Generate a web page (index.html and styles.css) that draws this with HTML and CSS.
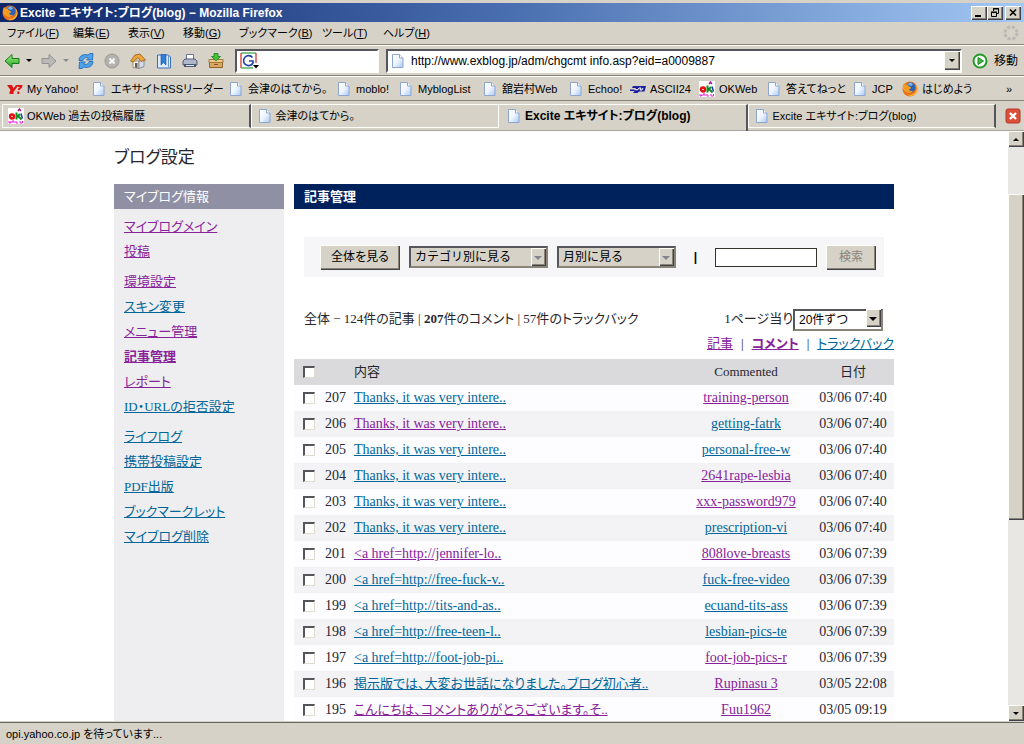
FILE: index.html
```html
<!DOCTYPE html>
<html lang="ja">
<head>
<meta charset="utf-8">
<title>Excite エキサイト:ブログ(blog) - Mozilla Firefox</title>
<link rel="stylesheet" href="styles.css">
</head>
<body>
<svg class="defs" width="0" height="0" aria-hidden="true">
  <defs>
    <linearGradient id="pg" x1="0" y1="0" x2="1" y2="1"><stop offset="0" stop-color="#fff"/><stop offset=".5" stop-color="#eef5ff"/><stop offset="1" stop-color="#a9c8f5"/></linearGradient>
    <linearGradient id="gr" x1="0" y1="0" x2="0" y2="1"><stop offset="0" stop-color="#a6f08a"/><stop offset="1" stop-color="#1fa01f"/></linearGradient>
    <symbol id="page" viewBox="0 0 16 16"><path d="M2.500 1.500h7l3.500 3.500v9.500H2.500z" fill="url(#pg)" stroke="#8ea6cf"/><path d="M9.500 1.500v3.500H13" fill="#fff" stroke="#8ea6cf"/></symbol>
    <symbol id="fox" viewBox="0 0 16 16"><circle cx="8" cy="8" r="7.500" fill="#e8701a"/><circle cx="8.500" cy="6.500" r="5" fill="#2c62b8"/><path d="M5 3l4-1.500 2 2-2 1.500z" fill="#79b8ee"/><path d="M.8 5.500C1 3.500 2 2.500 2.500 1.800c0 1 .5 1.500 1 1.800C5 3.500 6 4 6.500 5L9 6.500c0 1-1 1.500-2 1.700.5 1.800 2.500 2.300 4 1.300-1 2.500-4.500 3.500-7 1.500C1.500 10 .6 8 .8 5.500z" fill="#f59a22"/><path d="M13 3c2 2.500 2 6 0 8.500-2 2.300-5 3-8 2 4 3 10 1 10.500-5C15.600 6 14.500 4 13 3z" fill="#ffb52e"/></symbol>
    <symbol id="okweb" viewBox="0 0 16 16"><path d="M0 0h16v16H0z" fill="#fff"/><circle cx="4" cy="8.500" r="2" fill="none" stroke="#e01010" stroke-width="2.400"/><path d="M8.500 4.500v7M9 9l3-3M10 8l3.500 3.500" stroke="#118c22" stroke-width="2" fill="none"/><path d="M10 3L11.500 1 13 3" stroke="#a0108a" stroke-width="1.300" fill="none"/><path d="M13 5.500l1.500 5" stroke="#1838b0" stroke-width="1.500"/><path d="M1 13v2h1.500v-1.500M4 15v-2h2v2M8 13v2h2M12 13v2h2.500v-2" stroke="#f018d8" fill="none"/></symbol>
  </defs>
</svg>
<div class="window">
  <header class="titlebar">
    <svg class="icon"><use href="#fox"/></svg>
    <h1>Excite エキサイト:ブログ(blog) − Mozilla Firefox</h1>
    <div class="window-buttons">
      <button type="button" aria-label="最小化"><svg viewBox="0 0 14 12"><path d="M3 8h6v2H3z"/></svg></button>
      <button type="button" aria-label="元に戻す"><svg viewBox="0 0 14 12"><path d="M5.500 4V1.500h5v5H9M5 2h6M3.500 5.500h5v4h-5zM3 5h6" fill="none" stroke="#000"/></svg></button>
      <button type="button" class="apart" aria-label="閉じる"><svg viewBox="0 0 14 12"><path d="M4 2.500l6 6M10 2.500l-6 6" stroke="#000" stroke-width="1.600"/></svg></button>
    </div>
  </header>
  <nav class="menubar">
    <button type="button">ファイル(<u>F</u>)</button>
    <button type="button">編集(<u>E</u>)</button>
    <button type="button">表示(<u>V</u>)</button>
    <button type="button">移動(<u>G</u>)</button>
    <button type="button">ブックマーク(<u>B</u>)</button>
    <button type="button">ツール(<u>T</u>)</button>
    <button type="button">ヘルプ(<u>H</u>)</button>
    <svg class="icon throbber" viewBox="0 0 16 16"><circle cx="8" cy="8" r="6" fill="none" stroke="#bcb8b4" stroke-width="3" stroke-dasharray="3.200 1.510"/></svg>
  </nav>
  <div class="toolbar">
    <div class="tools">
      <button type="button" class="with-caret" aria-label="戻る"><svg class="icon" viewBox="0 0 16 16"><path d="M1 8l7-6.500v4h7v5H8v4z" fill="url(#gr)" stroke="#167a16"/></svg><i class="caret"></i></button>
      <button type="button" class="with-caret faded" aria-label="進む"><svg class="icon" viewBox="0 0 16 16"><path d="M15 8L8 1.500v4H1v5h7v4z" fill="#b9b9b7" stroke="#91918f"/></svg><i class="caret"></i></button>
      <button type="button" aria-label="更新"><svg class="icon" viewBox="0 0 16 16"><path d="M1 7.500C1 3 5.500.5 10 2l2-1.500 3 0-.5 6.500H8.500L10.500 5C8 3.800 5.500 5 5 7.500zM15 8.500c0 4.500-4.500 7-9 5.500L4 15.500H1L1.500 9h6l-2 2c2.500 1.200 5 0 5.500-2.500z" fill="#4fa3ea" stroke="#1b63b5" stroke-width=".8"/></svg></button>
      <button type="button" aria-label="中止"><svg class="icon" viewBox="0 0 16 16"><circle cx="8" cy="8" r="7" fill="#b4b2ae" stroke="#9a9894"/><path d="M5.500 5.500l5 5M10.500 5.500l-5 5" stroke="#fff" stroke-width="1.800"/></svg></button>
      <button type="button" aria-label="ホーム"><svg class="icon" viewBox="0 0 16 16"><path d="M3 8v6.500l6 1V8z" fill="#fff4dc" stroke="#8f7a55" stroke-width=".8"/><path d="M9 8v7.500l5-2V7z" fill="#d8dcea" stroke="#70789a" stroke-width=".8"/><path d="M.5 8L5 2l5-1 5.500 6-4.500 1.500L8 4.500 3 9z" fill="#efa63a" stroke="#8d5a1c" stroke-width=".8"/><path d="M5 10h2.500v5L5 14.500z" fill="#555c70"/></svg></button>
      <button type="button" aria-label="ブックマーク"><svg class="icon" viewBox="0 0 16 16"><path d="M1.500 2h11l2 2v11h-13z" fill="#dceafc" stroke="#3a70b8"/><path d="M5 1.500h5V12L7.500 9.500 5 12z" fill="#2d7fd8" stroke="#1b529e" stroke-width=".6"/><path d="M12.500 3v11" stroke="#6d92c6"/></svg></button>
      <button type="button" aria-label="印刷"><svg class="icon" viewBox="0 0 16 16"><path d="M4.500 7V1.500h7V7" fill="#fff" stroke="#66759a"/><path d="M1 8l2-2h10l2 2v4H1z" fill="#aeb6c9" stroke="#505a78"/><path d="M2 11h12v3H2z" fill="#4c5672"/><path d="M4 12.500h8" stroke="#dfe5f4"/></svg></button>
      <button type="button" aria-label="ダウンロード"><svg class="icon" viewBox="0 0 16 16"><path d="M1.500 8h13v6.500h-13z" fill="#d9a864" stroke="#91662a"/><path d="M1 6.500h14v3H1z" fill="#efc88d" stroke="#91662a" stroke-width=".8"/><path d="M6 11.500h4" stroke="#805622"/><path d="M6 .5h4v3h2.500L8 8 3.500 3.500H6z" fill="#46c238" stroke="#16801a" stroke-width=".8"/></svg></button>
    </div>
    <label class="field search-field">
      <svg class="google" viewBox="0 0 20 18"><path d="M1 1h15v15H1z" fill="#fff"/><path d="M1 1v15" stroke="#d4281e" stroke-width="1.200"/><path d="M1 1h15" stroke="#2f9e3d" stroke-width="1.200"/><path d="M16 1v10" stroke="#d4281e" stroke-width="1.200"/><path d="M1 16h12" stroke="#2f9e3d" stroke-width="1.200"/><path d="M12.500 5.500A5 5 0 1 0 13 11V9H9" fill="none" stroke="#2343ae" stroke-width="1.600"/><path d="M13 13h6l-3 3.500z"/></svg>
      <input type="text" aria-label="検索">
    </label>
    <label class="field url-field">
      <svg class="icon"><use href="#page"/></svg>
      <input type="text" aria-label="アドレス" value="http://www.exblog.jp/adm/chgcmt info.asp?eid=a0009887">
      <button type="button" class="drop" aria-label="履歴"><i class="caret"></i></button>
    </label>
    <button type="button" class="go"><svg class="icon" viewBox="0 0 16 16"><circle cx="8" cy="8" r="6.500" fill="#fff" stroke="#239a2a" stroke-width="2"/><path d="M6 4.500L11.500 8 6 11.500z" fill="#3fb83c" stroke="#188a1c"/></svg>移動</button>
  </div>
  <nav class="bookmarks">
    <a href="#"><svg class="icon" viewBox="0 0 16 16"><path d="M0 4h5l1.500 3.500L9 4h2.500L6.500 11v2H2.500v-2L3.500 9z" fill="#e01212"/><path d="M11 4h4.500l-.5 2.500L12.500 9h-1.800l.5-1.500L13 6h-2zM10.300 10.500h2V13h-2z" fill="#e01212"/></svg>My Yahoo!</a>
    <a href="#"><svg class="icon"><use href="#page"/></svg>エキサイトRSSリーダー</a>
    <a href="#"><svg class="icon"><use href="#page"/></svg>会津のはてから。</a>
    <a href="#"><svg class="icon"><use href="#page"/></svg>moblo!</a>
    <a href="#"><svg class="icon"><use href="#page"/></svg>MyblogList</a>
    <a href="#"><svg class="icon"><use href="#page"/></svg>舘岩村Web</a>
    <a href="#"><svg class="icon"><use href="#page"/></svg>Echoo!</a>
    <a href="#"><svg class="icon" viewBox="0 0 16 16"><path d="M3 5h13l-1.500 5.500H9L7.500 12H3l1.500-2H0V8.500h5L6 7H2z" fill="#1c1c9c"/><path d="M4.500 8.700h3.500l1-1.700h2l-1 2h2l1-2" stroke="#fff" fill="none"/></svg>ASCII24</a>
    <a href="#"><svg class="icon"><use href="#okweb"/></svg>OKWeb</a>
    <a href="#"><svg class="icon"><use href="#page"/></svg>答えてねっと</a>
    <a href="#"><svg class="icon"><use href="#page"/></svg>JCP</a>
    <a href="#"><svg class="icon"><use href="#fox"/></svg>はじめよう</a>
    <button type="button" aria-label="その他のブックマーク">»</button>
  </nav>
  <div class="tabs">
    <button type="button" class="tab"><svg class="icon"><use href="#okweb"/></svg>OKWeb 過去の投稿履歴</button>
    <button type="button" class="tab before-current"><svg class="icon"><use href="#page"/></svg>会津のはてから。</button>
    <button type="button" class="tab current"><svg class="icon"><use href="#page"/></svg>Excite エキサイト:ブログ(blog)</button>
    <button type="button" class="tab"><svg class="icon"><use href="#page"/></svg>Excite エキサイト:ブログ(blog)</button>
    <button type="button" class="close-tab" aria-label="タブを閉じる"><svg class="icon" viewBox="0 0 16 16"><rect x="1" y="1" width="14" height="14" rx="2" fill="#dc5038" stroke="#b23a28"/><path d="M5 5l6 6M11 5l-6 6" stroke="#fff" stroke-width="2.400"/></svg></button>
  </div>
  <div class="viewport">
    <div class="page">
      <h2>ブログ設定</h2>
      <div class="columns">
        <aside>
          <h3>マイブログ情報</h3>
          <ul>
            <li><a class="seen" href="#">マイブログメイン</a></li>
            <li><a class="seen" href="#">投稿</a></li>
          </ul>
          <ul>
            <li><a class="seen" href="#">環境設定</a></li>
            <li><a href="#">スキン変更</a></li>
            <li><a class="seen" href="#">メニュー管理</a></li>
            <li><a class="seen strong" href="#">記事管理</a></li>
            <li><a class="seen" href="#">レポート</a></li>
            <li><a href="#">ID・URLの拒否設定</a></li>
          </ul>
          <ul>
            <li><a href="#">ライフログ</a></li>
            <li><a href="#">携帯投稿設定</a></li>
            <li><a href="#">PDF出版</a></li>
            <li><a href="#">ブックマークレット</a></li>
            <li><a href="#">マイブログ削除</a></li>
          </ul>
        </aside>
        <main>
          <h3>記事管理</h3>
          <form class="filter">
            <button type="button" class="push">全体を見る</button>
            <span class="pick wide"><select aria-label="カテゴリ"><option>カテゴリ別に見る</option></select></span>
            <span class="pick"><select aria-label="月"><option>月別に見る</option></select></span>
            <b class="bar">|</b>
            <input type="text" aria-label="記事検索">
            <button type="button" class="push small" disabled>検索</button>
          </form>
          <div class="summary">
            <p>全体 − 124件の記事 | <b>207</b>件のコメント | 57件のトラックバック</p>
            <label>1ページ当り<span class="pick count"><select><option>20件ずつ</option></select></span></label>
          </div>
          <nav class="kinds"><a class="seen" href="#">記事</a><span>|</span><a class="seen strong" href="#">コメント</a><span>|</span><a href="#">トラックバック</a></nav>
          <table>
            <thead>
              <tr><th class="check"><input type="checkbox" aria-label="すべて選択"></th><th class="num"></th><th class="body">内容</th><th class="who">Commented</th><th class="date">日付</th></tr>
            </thead>
            <tbody>
              <tr><td><input type="checkbox" aria-label="207"></td><td>207</td><td><a href="#">Thanks, it was very intere..</a></td><td class="who"><a class="seen" href="#">training-person</a></td><td class="date">03/06 07:40</td></tr>
              <tr><td><input type="checkbox" aria-label="206"></td><td>206</td><td><a class="seen" href="#">Thanks, it was very intere..</a></td><td class="who"><a href="#">getting-fatrk</a></td><td class="date">03/06 07:40</td></tr>
              <tr><td><input type="checkbox" aria-label="205"></td><td>205</td><td><a href="#">Thanks, it was very intere..</a></td><td class="who"><a href="#">personal-free-w</a></td><td class="date">03/06 07:40</td></tr>
              <tr><td><input type="checkbox" aria-label="204"></td><td>204</td><td><a href="#">Thanks, it was very intere..</a></td><td class="who"><a class="seen" href="#">2641rape-lesbia</a></td><td class="date">03/06 07:40</td></tr>
              <tr><td><input type="checkbox" aria-label="203"></td><td>203</td><td><a href="#">Thanks, it was very intere..</a></td><td class="who"><a class="seen" href="#">xxx-password979</a></td><td class="date">03/06 07:40</td></tr>
              <tr><td><input type="checkbox" aria-label="202"></td><td>202</td><td><a href="#">Thanks, it was very intere..</a></td><td class="who"><a href="#">prescription-vi</a></td><td class="date">03/06 07:40</td></tr>
              <tr><td><input type="checkbox" aria-label="201"></td><td>201</td><td><a class="seen" href="#">&lt;a href=http://jennifer-lo..</a></td><td class="who"><a class="seen" href="#">808love-breasts</a></td><td class="date">03/06 07:39</td></tr>
              <tr><td><input type="checkbox" aria-label="200"></td><td>200</td><td><a href="#">&lt;a href=http://free-fuck-v..</a></td><td class="who"><a href="#">fuck-free-video</a></td><td class="date">03/06 07:39</td></tr>
              <tr><td><input type="checkbox" aria-label="199"></td><td>199</td><td><a href="#">&lt;a href=http://tits-and-as..</a></td><td class="who"><a href="#">ecuand-tits-ass</a></td><td class="date">03/06 07:39</td></tr>
              <tr><td><input type="checkbox" aria-label="198"></td><td>198</td><td><a href="#">&lt;a href=http://free-teen-l..</a></td><td class="who"><a href="#">lesbian-pics-te</a></td><td class="date">03/06 07:39</td></tr>
              <tr><td><input type="checkbox" aria-label="197"></td><td>197</td><td><a href="#">&lt;a href=http://foot-job-pi..</a></td><td class="who"><a class="seen" href="#">foot-job-pics-r</a></td><td class="date">03/06 07:39</td></tr>
              <tr><td><input type="checkbox" aria-label="196"></td><td>196</td><td><a class="kana" href="#">掲示版では、大変お世話になりました。ブログ初心者..</a></td><td class="who"><a class="seen" href="#">Rupinasu 3</a></td><td class="date">03/05 22:08</td></tr>
              <tr><td><input type="checkbox" aria-label="195"></td><td>195</td><td><a class="seen kana" href="#">こんにちは、コメントありがとうございます。そ..</a></td><td class="who"><a class="seen" href="#">Fuu1962</a></td><td class="date">03/05 09:19</td></tr>
            </tbody>
          </table>
        </main>
      </div>
    </div>
    <div class="scrollbar">
      <button type="button" class="step" aria-label="上へ"><i class="caret up"></i></button>
      <div class="track"><div class="thumb"></div></div>
      <button type="button" class="step" aria-label="下へ"><i class="caret"></i></button>
    </div>
  </div>
  <footer class="status">opi.yahoo.co.jp を待っています...</footer>
</div>
</body>
</html>
```
FILE: styles.css
```css
:root {
  --face: #d6d2c8;
  --lite: #fffffa;
  --dark: #8a8478;
  --ink: #26262e;
  --raised: inset 1px 1px 0 var(--lite), inset -1px -1px 0 #404048, inset -2px -2px 0 var(--dark);
}
* { box-sizing: border-box; }
body {
  margin: 0;
  background: var(--face);
  font: 12px/16px "Liberation Sans", "Noto Sans CJK JP", sans-serif;
  font-feature-settings: "palt";
  color: #000;
}
button, input, select { font: inherit; font-feature-settings: inherit; color: inherit; border: 0; padding: 0; margin: 0; background: none; border-radius: 0; }
h1, h2, h3, p, ul { margin: 0; padding: 0; font-weight: normal; font-size: inherit; }
ul { list-style: none; }
.defs { position: absolute; }
.icon { width: 16px; height: 16px; flex: none; display: block; }
.window { display: flex; flex-direction: column; height: 100vh; white-space: nowrap; overflow: hidden; }

.titlebar {
  display: flex; align-items: center; height: 22px; padding: 0 3px 0 2px; gap: 2px;
  background: linear-gradient(90deg, #0b246a, #4a6fb0 50%, #a3c8f4);
  border-top: 3px solid var(--face);
  flex: none;
}
.titlebar h1 { flex: 1; color: #fff; font-weight: bold; font-size: 12px; }
.window-buttons { display: flex; }
.window-buttons button { width: 16px; height: 14px; background: var(--face); box-shadow: var(--raised); display: flex; padding: 1px; }
.window-buttons svg { width: 14px; height: 12px; }
.window-buttons .apart { margin-left: 2px; }

.menubar {
  display: grid; grid-template-columns: 66px 55px 55px 56px 83px 61px 60px 1fr; align-items: center;
  height: 23px; padding: 0 5px 0 7px; border-bottom: 1px solid var(--dark); flex: none;
  font-size: 11px;
}
.menubar button { text-align: left; }
.throbber { justify-self: end; }

.toolbar { display: flex; align-items: center; height: 31px; padding: 0 6px 0 4px; border-top: 1px solid var(--lite); border-bottom: 1px solid var(--dark); flex: none; }
.tools { display: flex; gap: 10px; width: 231px; }
.tools .with-caret { display: flex; align-items: center; gap: 6px; width: 27px; }
.caret { flex: none; width: 0; height: 0; border: 3px solid transparent; border-top-color: #000; border-bottom: 0; }
.caret.up { border: 3px solid transparent; border-bottom-color: #000; border-top: 0; }
.faded .caret { border-top-color: #8a8a8a; }
.field { display: flex; align-items: center; height: 24px; background: #fff; border: 2px solid #55555c; border-right-color: var(--lite); border-bottom-color: var(--lite); }
.field input { flex: 1; min-width: 0; height: 18px; outline: 0; }
.search-field { width: 144px; margin-right: 7px; padding-left: 2px; }
.google { width: 22px; height: 18px; flex: none; }
.url-field { flex: 1; padding-left: 2px; gap: 5px; }
.drop { width: 16px; height: 19px; background: var(--face); box-shadow: var(--raised); display: flex; align-items: center; justify-content: center; }
.go { display: flex; align-items: center; gap: 6px; margin-left: 10px; }

.bookmarks {
  display: grid; grid-template-columns: 84fr 137fr 108fr 62fr 84fr 86fr 62fr 69fr 67fr 86fr 50fr 100fr 14fr; align-items: center;
  height: 25px; padding: 0 8px 0 7px; border-bottom: 1px solid var(--dark); border-top: 1px solid var(--lite); flex: none;
  font-size: 11px;
}
.bookmarks a { display: flex; align-items: center; gap: 4px; color: inherit; text-decoration: none; }

.tabs { display: grid; grid-template-columns: repeat(4, 1fr) 25px; height: 30px; padding: 3px 3px 0 2px; border-bottom: 1px solid #a8a49a; flex: none; align-items: start; }
.tab { display: flex; align-items: center; gap: 3px; height: 24px; padding: 0 5px; border: 1px solid var(--lite); border-right: 2px solid #55555c; font-size: 11px; }
.tab.before-current { border-right: 1px solid var(--lite); }
.tab.current { height: 27px; padding-bottom: 4px; padding-left: 7px; border-left: 0; border-bottom: 0; font-weight: bold; font-size: 12px; }
.close-tab { display: flex; align-items: center; height: 24px; justify-self: end; }

.viewport { display: flex; flex: 1; min-height: 0; background: #fff; border-bottom: 1px solid var(--face); }
.scrollbar { display: flex; flex-direction: column; width: 16px; background: #e9e7e3; flex: none; }
.step { height: 16px; background: var(--face); box-shadow: var(--raised); display: flex; align-items: center; justify-content: center; }
.track { flex: 1; display: grid; grid-template-rows: 47fr 327fr 185fr; }
.thumb { grid-row: 2; background: var(--face); box-shadow: var(--raised); }
.status { height: 22px; padding: 3px 6px; border-top: 1px solid #66665c; flex: none; font-size: 11px; }

.page {
  flex: 1; min-width: 0; overflow: hidden; display: flex; flex-direction: column;
  padding: 0 calc((100% - 796px) / 2);
  font: 13px/25px "Liberation Serif", "Noto Sans CJK JP", serif;
  font-feature-settings: "palt";
  color: var(--ink);
}
.page h2 { font-size: 17px; line-height: 24px; padding: 15px 0 14px; }
.columns { display: grid; grid-template-columns: 170px 1fr; gap: 10px; flex: 1; }
.page a { color: #006699; }
.page a.seen { color: #88229a; }
.page a.strong { font-weight: bold; }
aside { background: #eeeef0; }
aside h3 { background: #9090a4; color: #fff; padding-left: 10px; }
aside ul { padding: 0 10px; margin-bottom: 5px; }
aside h3 + ul { padding-top: 5px; }
main { min-width: 0; }
main h3 { background: #00225c; color: #fff; font-weight: bold; padding-left: 10px; }
.filter { display: flex; align-items: center; gap: 9px; margin: 28px 10px 0; height: 40px; padding: 0 8px 0 16px; background: #f6f6f8; color: #000; font: 12px/16px "Liberation Sans", "Noto Sans CJK JP", sans-serif; font-feature-settings: "palt"; }
.push { width: 80px; height: 25px; background: var(--face); box-shadow: var(--raised); }
.push.small { width: 50px; }
.push:disabled { color: #8a8478; }
.filter input { width: 102px; height: 19px; border: 1px solid #33332c; background: #fff; }
.bar { flex: 1; text-align: center; }
.pick { position: relative; display: inline-block; width: 119px; height: 22px; }
.pick.wide { width: 139px; }
.pick select { appearance: none; width: 100%; height: 100%; padding: 0 4px; background: var(--face); border: 2px solid #55555c; border-right-color: var(--dark); border-bottom-color: var(--dark); font: 12px/16px "Liberation Sans", "Noto Sans CJK JP", sans-serif; color: #000; }
.pick::before { content: ""; position: absolute; right: 2px; top: 2px; bottom: 2px; width: 15px; background: var(--face); box-shadow: var(--raised); }
.pick::after { content: ""; position: absolute; right: 6px; top: 10px; border: 4px solid transparent; border-top-color: #84848c; border-bottom: 0; }
.pick.count { width: 90px; }
.pick.count select { background: #fff; }
.pick.count::after { border-top-color: #000; }
.summary { display: flex; justify-content: space-between; align-items: center; margin: 28px 11px 0 10px; height: 26px; }
.summary label { display: flex; align-items: center; }
.kinds { display: flex; justify-content: flex-end; gap: 8px; line-height: 26px; padding-bottom: 2px; }
table { width: 100%; border-collapse: collapse; table-layout: fixed; font-size: 14px; line-height: 20px; }
th { font-weight: normal; text-align: left; font-size: 13px; }
th, td { height: 26px; padding: 0; }
thead { background: #dadadc; }
tbody tr:nth-child(even) { background: #f3f3f6; }
tbody tr:nth-child(odd) { background: #fdfdff; }
.check { width: 31px; }
.num { width: 29px; }
th.who { width: 132px; }
th.date { width: 82px; }
.who, .date { text-align: center; }
.kana { font-size: 13px; }
table input { appearance: none; display: block; width: 12px; height: 12px; margin-left: 9px; background: #fff; border: 1px solid #e0dcd0; border-top: 2px solid #55555c; border-left: 2px solid #55555c; }
```
